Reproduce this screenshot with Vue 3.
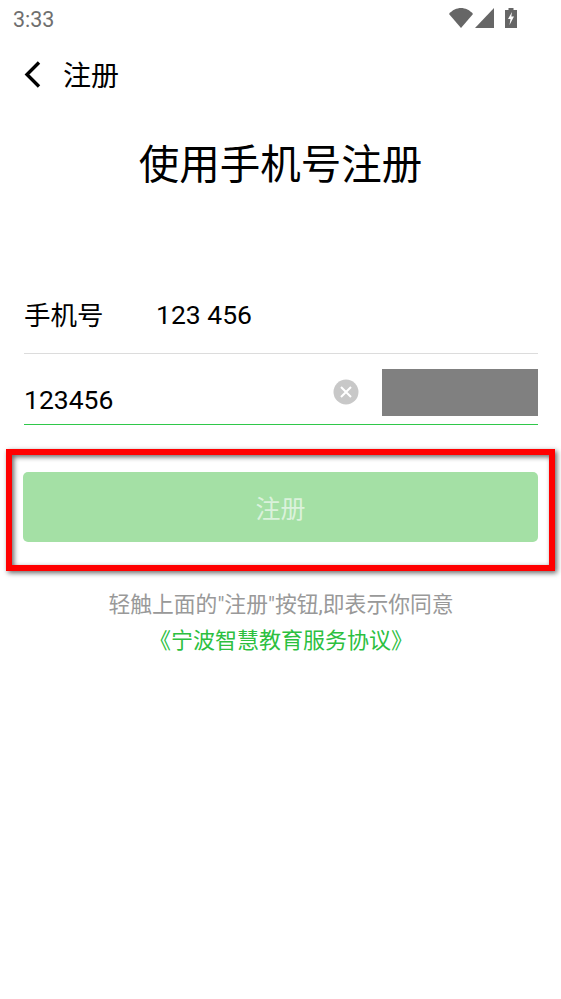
<script setup>
import { ref } from 'vue';

const phone = ref('123 456');
const code = ref('123456');
</script>

<template>
    <div class="page">
        <div class="status-bar">
            <span class="clock">3:33</span>
            <div class="status-icons">
                <svg width="24" height="20" viewBox="0 0 24 20">
                    <path d="M0 6C3 2 8 0 12 0C16 0 21 2 24 6L12 20Z" fill="#666" />
                </svg>
                <svg width="19" height="20" viewBox="0 0 19 20">
                    <path d="M19 0V20H0Z" fill="#666" />
                </svg>
                <svg class="battery" width="12" height="20" viewBox="0 0 12 20">
                    <path d="M3.500 0H8.500V2H12V20H0V2H3.500Z" fill="#666" />
                    <path d="M7 4L3 11H5.500L4.500 17L9 8.500H6.300Z" fill="#fff" />
                </svg>
            </div>
        </div>

        <div class="nav-bar">
            <svg class="back" width="22" height="30" viewBox="0 0 22 30">
                <path d="M17 2.500L5 14.500L17 26.500" fill="none" stroke="#000" stroke-width="3.400" />
            </svg>
            <span class="nav-title">注册</span>
        </div>

        <h1 class="title">使用手机号注册</h1>

        <div class="form">
            <div class="phone-row">
                <span class="phone-label">手机号</span>
                <span class="phone-value">{{ phone }}</span>
            </div>
            <div class="code-row">
                <span class="code-value">{{ code }}</span>
                <span class="clear">
                    <svg width="26" height="26" viewBox="0 0 26 26">
                        <circle cx="13" cy="13" r="12.500" fill="#c8c8c8" />
                        <path d="M8 8L18 18M18 8L8 18" stroke="#fff" stroke-width="2" />
                    </svg>
                </span>
                <div class="code-image"></div>
            </div>
            <button class="submit" type="button">注册</button>
            <p class="hint">轻触上面的"注册"按钮,即表示你同意</p>
            <a class="agreement">《宁波智慧教育服务协议》</a>
        </div>

        <div class="highlight"></div>
    </div>
</template>

<style scoped>
.page {
    position: relative;
    width: 561px;
    height: 999px;
    overflow: hidden;
    background: #fff;
    color: #000;
    font-family: Roboto, "Noto Sans CJK SC", sans-serif;
}

.status-bar {
    height: 38px;
    display: flex;
    align-items: center;
    justify-content: space-between;
    padding: 0 44px 0 13px;
}

.clock {
    font-size: 21.500px;
    color: #6f6f6f;
}

.status-icons {
    display: flex;
    align-items: center;
    gap: 2px;
    margin-top: -2px;
}

.battery {
    margin-left: 9px;
}

.nav-bar {
    height: 74px;
    display: flex;
    align-items: center;
    gap: 19px;
    padding-left: 22px;
}

.nav-title {
    font-size: 28px;
    margin-top: -2px;
}

.title {
    margin: 0;
    padding-top: 26px;
    font-size: 40.500px;
    line-height: 54px;
    font-weight: 400;
    text-align: center;
}

.form {
    padding: 91px 23px 0 24px;
}

.phone-row {
    height: 70px;
    display: flex;
    align-items: center;
    border-bottom: 1px solid #dcdcdc;
    font-size: 26.500px;
}

.phone-label {
    width: 132px;
    margin-top: -10px;
}

.phone-value {
    margin-top: -8px;
}

.code-row {
    height: 70px;
    display: flex;
    align-items: center;
    border-bottom: 1px solid #2fc84a;
    font-size: 26.500px;
}

.code-value {
    flex: 1;
    padding-top: 20px;
}

.clear {
    display: flex;
    margin-right: 23px;
    margin-top: 6px;
}

.code-image {
    width: 156px;
    height: 47px;
    margin-top: 7px;
    background: #808080;
}

.submit {
    display: block;
    width: 515px;
    height: 70px;
    margin: 47px 0 0 -1px;
    border: none;
    border-radius: 5px;
    background: #a4e0a5;
    color: #dbf2dc;
    font-family: inherit;
    font-size: 25px;
}

.hint {
    margin: 48px 0 0;
    font-size: 21.800px;
    line-height: 30px;
    color: #999;
    text-align: center;
}

.agreement {
    display: block;
    margin-top: 6px;
    font-size: 22px;
    line-height: 30px;
    color: #2cc03f;
    text-align: center;
}

.highlight {
    position: absolute;
    left: 6px;
    top: 449px;
    width: 549px;
    height: 122px;
    box-sizing: border-box;
    border: 6px solid #f00;
    box-shadow: 2px 2px 5px rgba(0, 0, 0, 0.6), inset 2px 2px 5px rgba(0, 0, 0, 0.6);
}
</style>
